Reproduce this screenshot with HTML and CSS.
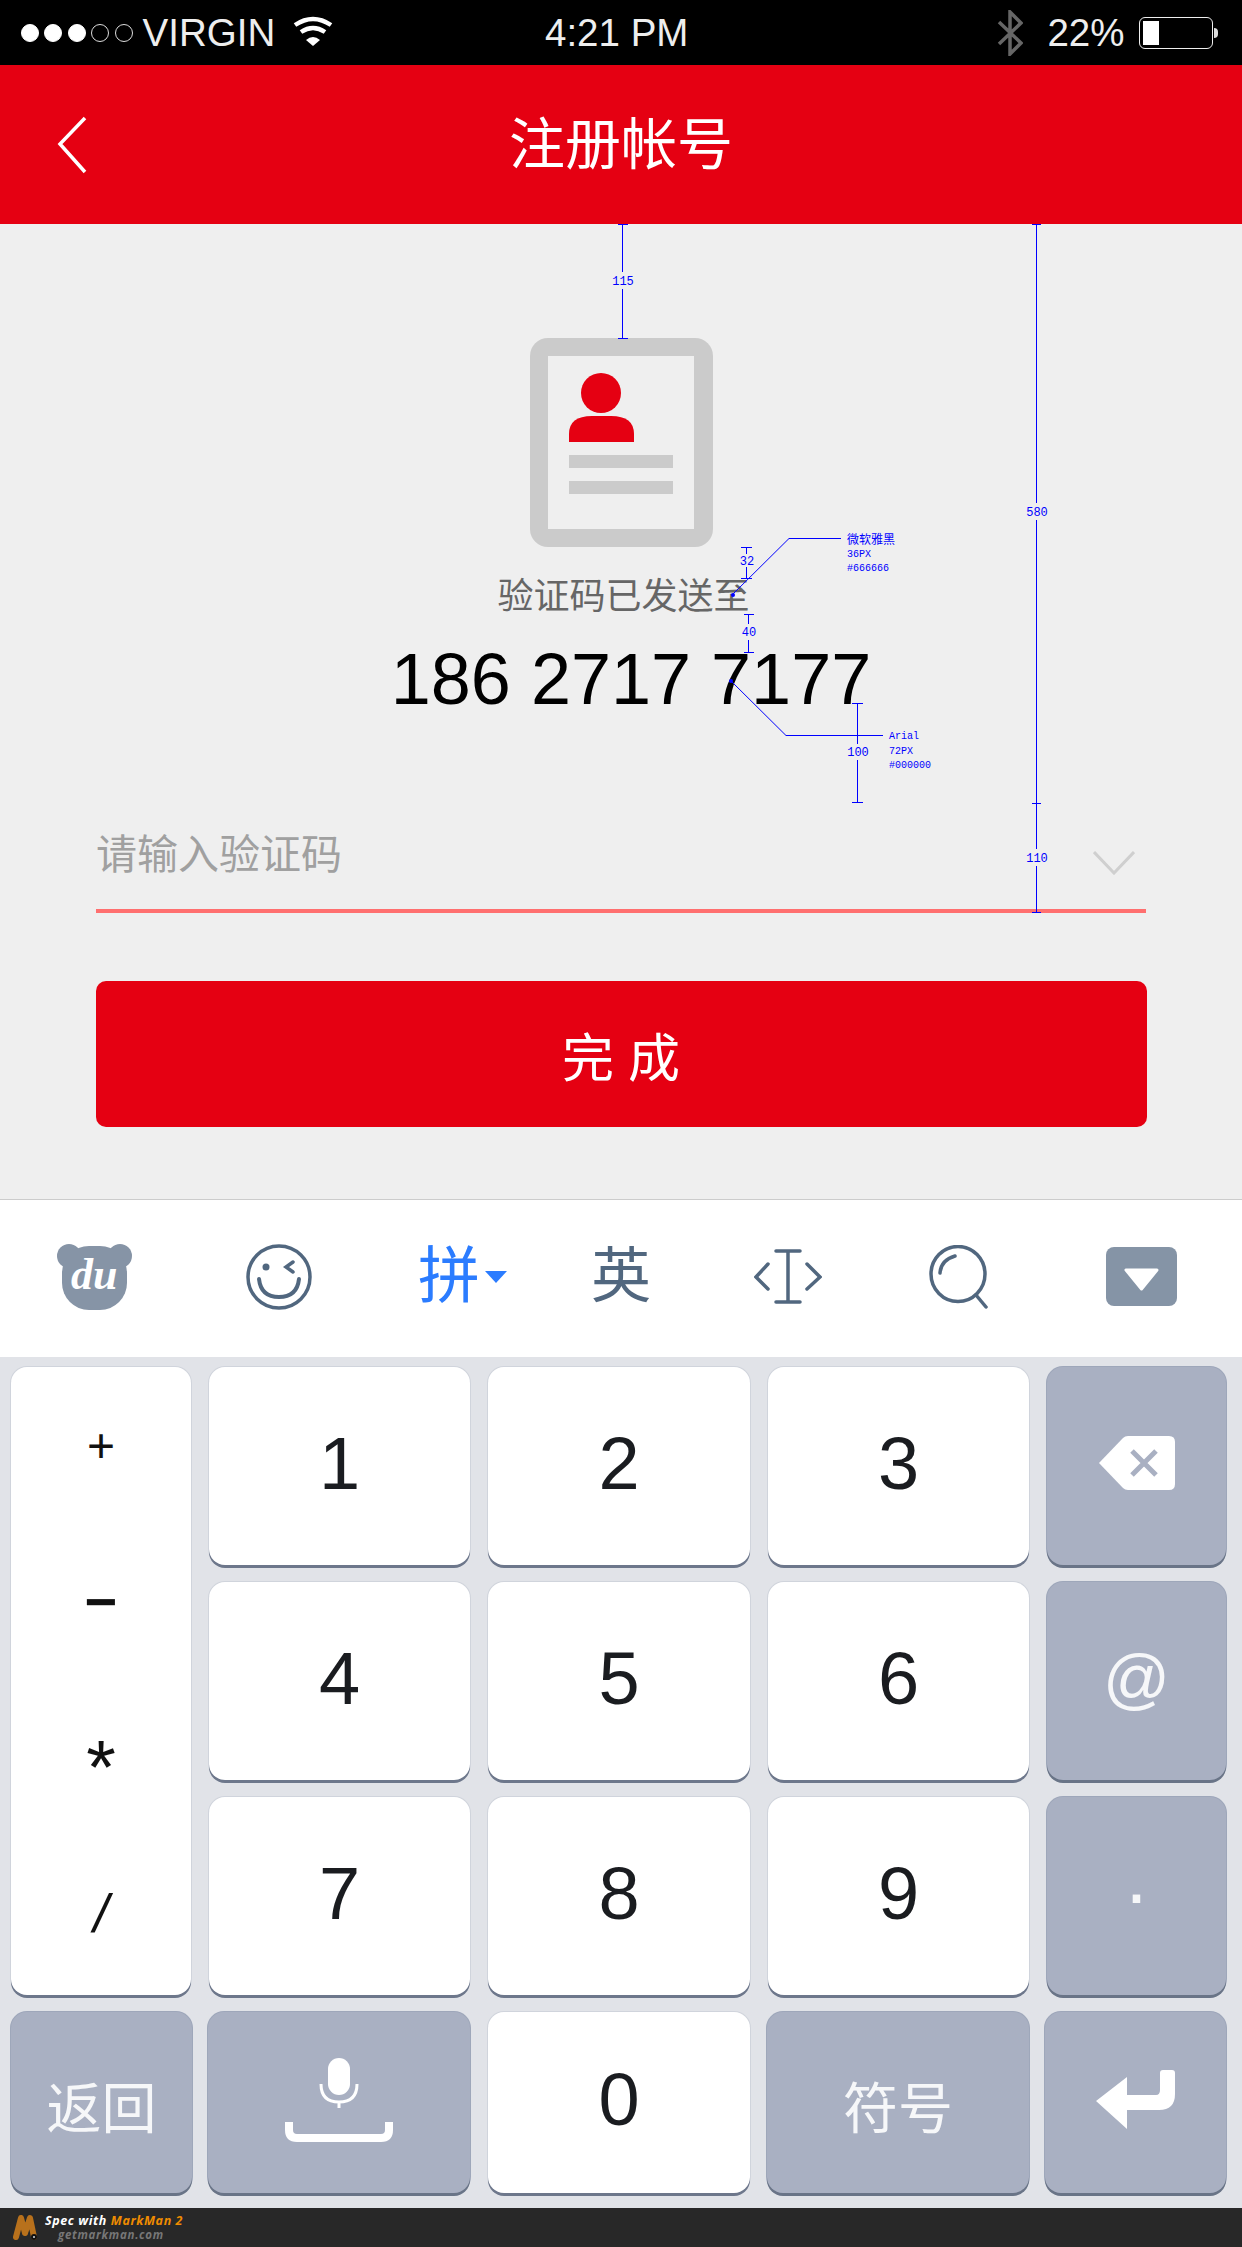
FILE: index.html
```html
<!DOCTYPE html>
<html lang="zh-CN">
<head>
    <meta charset="UTF-8">
    <meta name="viewport" content="width=device-width, initial-scale=1.0">
    <title>注册帐号</title>
    <link rel="stylesheet" href="styles.css">
</head>
<body>
    <div class="status-bar">
        <div class="status-left">
            <div class="signal">
                <span class="dot on"></span>
                <span class="dot on"></span>
                <span class="dot on"></span>
                <span class="dot"></span>
                <span class="dot"></span>
            </div>
            <span class="carrier">VIRGIN</span>
            <svg class="wifi" width="40" height="30" viewBox="0 0 40 30">
                <path d="M2 9 Q20 -3 38 9" fill="none" stroke="#fff" stroke-width="4.5"/>
                <path d="M8 16 Q20 8 32 16" fill="none" stroke="#fff" stroke-width="4.5"/>
                <path d="M13 24 L20 30 L27 24 Q20 18 13 24 Z" fill="#fff"/>
            </svg>
        </div>
        <span class="clock">4:21 PM</span>
        <div class="status-right">
            <svg class="bluetooth" width="26" height="46" viewBox="0 0 26 46">
                <path d="M2 12 L24 33 L13 44 L13 2 L24 13 L2 34" fill="none" stroke="#666" stroke-width="3.5"/>
            </svg>
            <span class="percent">22%</span>
            <div class="battery"><div class="battery-fill"></div></div>
            <div class="battery-nub"></div>
        </div>
    </div>

    <header class="nav">
        <svg class="back" width="30" height="58" viewBox="0 0 30 58">
            <path d="M28 2 L3 28 L28 56" fill="none" stroke="#fff" stroke-width="3.5"/>
        </svg>
        <h1 class="nav-title">注册帐号</h1>
    </header>

    <main class="content">
        <svg class="id-card" width="183" height="209" viewBox="0 0 183 209">
            <rect width="183" height="209" rx="18" fill="#cbcbcb"/>
            <rect x="18" y="18" width="146" height="173" fill="#efefef"/>
            <ellipse cx="71" cy="55" rx="20" ry="20" fill="#e50012"/>
            <path d="M39 104 V96 Q39 78 62 78 H81 Q104 78 104 96 V104 Z" fill="#e50012"/>
            <rect x="39" y="117" width="104" height="13" fill="#cbcbcb"/>
            <rect x="39" y="143" width="104" height="13" fill="#cbcbcb"/>
        </svg>
        <p class="hint">验证码已发送至</p>
        <p class="phone">186 2717 7177</p>
        <div class="field">
            <span class="placeholder">请输入验证码</span>
            <svg class="field-arrow" width="42" height="24" viewBox="0 0 42 24">
                <path d="M1 1 L21 22 L41 1" fill="none" stroke="#cfcfcf" stroke-width="3"/>
            </svg>
        </div>
        <button class="submit">完成</button>
    </main>

    <div class="toolbar">
        <svg width="75" height="67" viewBox="0 0 75 67">
            <circle cx="12" cy="13" r="12" fill="#8694a6"/>
            <circle cx="63" cy="13" r="12" fill="#8694a6"/>
            <rect x="5" y="3" width="65" height="64" rx="27" fill="#8694a6"/>
            <text class="du" x="14" y="46">du</text>
        </svg>
        <svg width="66" height="66" viewBox="0 0 66 66">
            <ellipse cx="33" cy="33" rx="31" ry="31" fill="none" stroke="#51677f" stroke-width="3.5"/>
            <circle cx="20" cy="23" r="3.5" fill="#51677f"/>
            <path d="M47 18 L40 23 L47 28" fill="none" stroke="#51677f" stroke-width="3.5" stroke-linecap="round"/>
            <path d="M13 35 Q15 53 33 53 Q51 53 53 35" fill="none" stroke="#51677f" stroke-width="4" stroke-linecap="round"/>
        </svg>
        <div class="pinyin">
            <span class="pinyin-text">拼</span>
            <span class="pinyin-arrow"></span>
        </div>
        <span class="english">英</span>
        <svg width="68" height="56" viewBox="0 0 68 56">
            <path d="M22 2 H46 M34 2 V53 M22 53 H46" fill="none" stroke="#51677f" stroke-width="3.5" stroke-linecap="round"/>
            <path d="M14 15 L2 28 L14 40 M53 15 L66 28 L53 40" fill="none" stroke="#51677f" stroke-width="3.5" stroke-linecap="round"/>
        </svg>
        <svg width="60" height="64" viewBox="0 0 60 64">
            <ellipse cx="29" cy="29" rx="27" ry="27.5" fill="none" stroke="#51677f" stroke-width="3.5"/>
            <path d="M47 50 L57 62" stroke="#51677f" stroke-width="3.5" stroke-linecap="round"/>
            <path d="M11 28 Q12 15 26 11" fill="none" stroke="#51677f" stroke-width="3.5" stroke-linecap="round"/>
        </svg>
        <svg width="71" height="59" viewBox="0 0 71 59">
            <rect width="71" height="59" rx="8" fill="#8594a6"/>
            <path d="M20 23 H51 L35.5 42 Z" fill="#fff" stroke="#fff" stroke-width="3" stroke-linejoin="round"/>
        </svg>
    </div>

    <div class="keyboard">
        <div class="key symbols">
            <span class="sym-plus">+</span>
            <span class="sym-minus">−</span>
            <span class="sym-star">*</span>
            <span class="sym-slash">/</span>
        </div>
        <div class="key">1</div>
        <div class="key">2</div>
        <div class="key">3</div>
        <div class="key gray">
            <svg width="76" height="54" viewBox="0 0 76 54">
                <path d="M0 27 L24 2 Q26 0 29 0 H70 Q76 0 76 6 V48 Q76 54 70 54 H29 Q26 54 24 52 Z" fill="#fff"/>
                <path d="M33 15 L57 39 M57 15 L33 39" stroke="#a9b0c2" stroke-width="5"/>
            </svg>
        </div>
        <div class="key">4</div>
        <div class="key">5</div>
        <div class="key">6</div>
        <div class="key gray at">@</div>
        <div class="key">7</div>
        <div class="key">8</div>
        <div class="key">9</div>
        <div class="key gray dot-key">·</div>
        <div class="key gray label wide-left">返回</div>
        <div class="key gray wide">
            <svg width="108" height="84" viewBox="0 0 108 84">
                <rect x="43" y="0" width="22" height="37" rx="11" fill="#fff"/>
                <path d="M36 26 Q36 44 54 44 Q72 44 72 26 M54 44 V50" fill="none" stroke="#fff" stroke-width="3"/>
                <path d="M4 64 V72 Q4 80 12 80 H96 Q104 80 104 72 V64" fill="none" stroke="#fff" stroke-width="8"/>
            </svg>
        </div>
        <div class="key">0</div>
        <div class="key gray label wide">符号</div>
        <div class="key gray wide-right">
            <svg width="80" height="60" viewBox="0 0 80 60">
                <path d="M0 31 L31 7 V25 H60 Q64 25 64 20 V3 Q64 0 67 0 H76 Q79 0 79 3 V24 Q79 40 63 40 H31 V59 Z" fill="#fff"/>
            </svg>
        </div>
    </div>

    <footer class="markman">
        <svg width="26" height="30" viewBox="0 0 26 30">
            <path d="M4 24 L9 5 L13 20 M13 20 L18 5 L22 24" fill="none" stroke="#b8711c" stroke-width="6" stroke-linecap="round" stroke-linejoin="round"/>
            <circle cx="22" cy="24" r="3" fill="#111"/>
            <circle cx="22" cy="24" r="1" fill="#ddd"/>
        </svg>
        <div class="markman-text">
            <div class="markman-line"><span>Spec with</span> <span class="markman-name">MarkMan 2</span></div>
            <div class="markman-url">getmarkman.com</div>
        </div>
    </footer>

    <!-- measuring marks sit on top of the design -->
    <svg class="specs" width="1242" height="2247" viewBox="0 0 1242 2247">
        <g fill="none" stroke="#00f" stroke-width="1">
            <path d="M622.5 224 V272 M622.5 289 V338 M618 224.5 H628 M618 338.5 H628"/>
            <path d="M1036.5 224 V503 M1036.5 520 V849 M1036.5 866 V912 M1032 224.5 H1041 M1032 803.5 H1041 M1032 912.5 H1041"/>
            <path d="M746.5 547 V554 M746.5 567 V578 M741 547.5 H752 M741 578.5 H752"/>
            <path d="M748.5 614 V624 M748.5 640 V652 M744 614.5 H754 M744 652.5 H754"/>
            <path d="M857.5 703 V744 M857.5 760 V803 M852 703.5 H863 M852 802.5 H863"/>
            <path d="M732 595 L789 538.5 H841"/>
            <path d="M730 680 L786 735.5 H883"/>
        </g>
        <circle cx="733" cy="595" r="2" fill="#00f"/>
        <circle cx="731" cy="681" r="2" fill="#00f"/>
        <g class="spec-text">
            <text x="623" y="285" text-anchor="middle">115</text>
            <text x="1037" y="516" text-anchor="middle">580</text>
            <text x="1037" y="862" text-anchor="middle">110</text>
            <text x="747" y="565" text-anchor="middle">32</text>
            <text x="749" y="636" text-anchor="middle">40</text>
            <text x="858" y="756" text-anchor="middle">100</text>
        </g>
        <g class="spec-note">
            <text class="spec-cjk" x="847" y="544">微软雅黑</text>
            <text x="847" y="557">36PX</text>
            <text x="847" y="571">#666666</text>
            <text x="889" y="739">Arial</text>
            <text x="889" y="754">72PX</text>
            <text x="889" y="768">#000000</text>
        </g>
    </svg>
</body>
</html>
```

FILE: styles.css
```css
* {
    box-sizing: border-box;
}

body {
    position: relative;
    width: 1242px;
    height: 2247px;
    margin: 0;
    overflow: hidden;
    background: #efefef;
    font-family: "Liberation Sans", "Noto Sans CJK SC", sans-serif;
}

/* status bar */
.status-bar {
    display: flex;
    align-items: center;
    height: 65px;
    padding-left: 21px;
    background: #000;
    color: #eee;
    font-size: 38.5px;
}

.status-left {
    display: flex;
    align-items: center;
    width: 524px;
}

.signal {
    display: flex;
    gap: 5.4px;
}

.dot {
    width: 18px;
    height: 18px;
    border: 1px solid #ddd;
    border-radius: 50%;
}

.dot.on {
    background: #fff;
    border-color: #fff;
}

.carrier {
    margin-left: 10px;
}

.wifi {
    margin-left: 18px;
    margin-top: -4px;
}

.status-right {
    display: flex;
    align-items: center;
    margin-left: 309px;
}

.bluetooth {
    margin-top: 0;
}

.percent {
    margin-left: 24px;
}

.battery {
    width: 74px;
    height: 32px;
    margin-left: 15px;
    padding: 3px;
    border: 1.5px solid #eee;
    border-radius: 6px;
}

.battery-fill {
    width: 16px;
    height: 100%;
    background: #fff;
}

.battery-nub {
    width: 4px;
    height: 10px;
    margin-left: 1px;
    background: #ddd;
    border-radius: 0 4px 4px 0;
}

/* red title bar */
.nav {
    position: relative;
    height: 159px;
    background: #e50012;
    color: #fff;
    display: flex;
    align-items: center;
    justify-content: center;
}

.back {
    position: absolute;
    left: 57px;
    top: 51px;
}

.nav-title {
    margin: 0;
    font-size: 56px;
    font-weight: 400;
    line-height: 1;
}

/* form */
.content {
    display: flex;
    flex-direction: column;
    align-items: center;
    height: 975px;
    padding-top: 114px;
}

.id-card {
    display: block;
}

.hint {
    margin: 32px 0 0;
    padding-left: 5px;
    font-size: 36px;
    line-height: 36px;
    color: #666;
}

.phone {
    margin: 28px 0 0;
    padding-left: 20px;
    font-size: 72px;
    line-height: 72px;
    color: #000;
    white-space: pre;
}

.field {
    display: flex;
    align-items: center;
    justify-content: space-between;
    width: 1050px;
    height: 138px;
    margin-top: 60px;
    padding: 26px 11px 0 0;
    border-bottom: 4px solid #ff6f6f;
}

.placeholder {
    font-size: 41px;
    color: #a0a0a0;
    line-height: 1;
}

.field-arrow {
    margin-top: 16px;
}

.submit {
    width: 1051px;
    height: 146px;
    margin-top: 68px;
    padding: 0 0 0 14px;
    border: 0;
    border-radius: 10px;
    background: #e50012;
    color: #fff;
    font-family: inherit;
    font-size: 52px;
    letter-spacing: 14px;
}

/* keyboard */
.toolbar {
    display: grid;
    grid-template-columns: 189px 172px 173px 163px 175px 177px 71px;
    align-items: center;
    height: 158px;
    padding: 0 0 4px 57px;
    background: #fff;
    border-top: 1px solid #ccc;
}

.du {
    font-family: "Liberation Serif", serif;
    font-size: 44px;
    font-style: italic;
    font-weight: 700;
    fill: #fff;
}

.pinyin {
    display: flex;
    align-items: center;
}

.pinyin-text {
    font-size: 62px;
    line-height: 1;
    color: #2b7cff;
}

.pinyin-arrow {
    margin-left: 5px;
    border-top: 12px solid #2b7cff;
    border-left: 11px solid transparent;
    border-right: 11px solid transparent;
}

.english {
    font-size: 60px;
    line-height: 1;
    color: #51677f;
}

.keyboard {
    display: grid;
    grid-template-columns: 180px 261px 262px 261px 179px;
    grid-template-rows: 198px 198px 198px 181px;
    gap: 17px 18px;
    height: 851px;
    padding: 10px 16px 15px 11px;
    background: #e1e3e8;
}

.key {
    display: flex;
    align-items: center;
    justify-content: center;
    padding-bottom: 6px;
    background: #fff;
    border-radius: 16px;
    box-shadow: 0 3px 0 #6d778b, 0 0 0 1px #d0d4dc;
    color: #1a1c20;
    font-size: 74px;
}

.key.gray {
    background: #a9b0c2;
    color: #f6f7f9;
    box-shadow: 0 3px 0 #697487, 0 0 0 1px #9ea7ba;
}

.key.wide {
    margin-left: -1px;
}

.key.wide-left {
    margin-right: -1px;
}

.key.wide-right {
    margin-left: -2px;
}

.symbols {
    grid-row: span 3;
    display: grid;
    grid-auto-rows: 156px;
    justify-items: center;
    align-items: center;
    align-content: start;
    padding: 0;
    font-size: 48px;
    color: #111;
}

.sym-minus {
    font-weight: 700;
    font-size: 56px;
}

.sym-star {
    font-size: 76px;
    line-height: 1;
    padding-top: 20px;
}

.sym-slash {
    font-size: 54px;
    font-style: italic;
}

.at {
    font-size: 66px;
}

.dot-key {
    font-size: 78px;
}

.label {
    padding-top: 3px;
    padding-bottom: 0;
    font-size: 55px;
}

.markman {
    display: flex;
    align-items: center;
    gap: 7px;
    height: 39px;
    padding-left: 12px;
    background: #282828;
    color: #fff;
}

.markman-text {
    font-family: "Open Sans", sans-serif;
    font-style: italic;
    font-weight: 700;
    line-height: 1;
}

.markman-line {
    font-size: 12.5px;
    letter-spacing: 0.6px;
}

.markman-name {
    color: #f08c00;
}

.markman-url {
    margin: 2px 0 0 13px;
    font-size: 11.5px;
    letter-spacing: 0.7px;
    color: #777;
}

/* measuring marks */
.specs {
    position: absolute;
    left: 0;
    top: 0;
}

.spec-text {
    font-family: "Liberation Mono", monospace;
    font-size: 12px;
    fill: #00f;
}

.spec-note {
    font-family: "Liberation Mono", monospace;
    font-size: 10px;
    fill: #00f;
}

.spec-cjk {
    font-family: "Noto Sans CJK SC", sans-serif;
    font-size: 12px;
}
```
